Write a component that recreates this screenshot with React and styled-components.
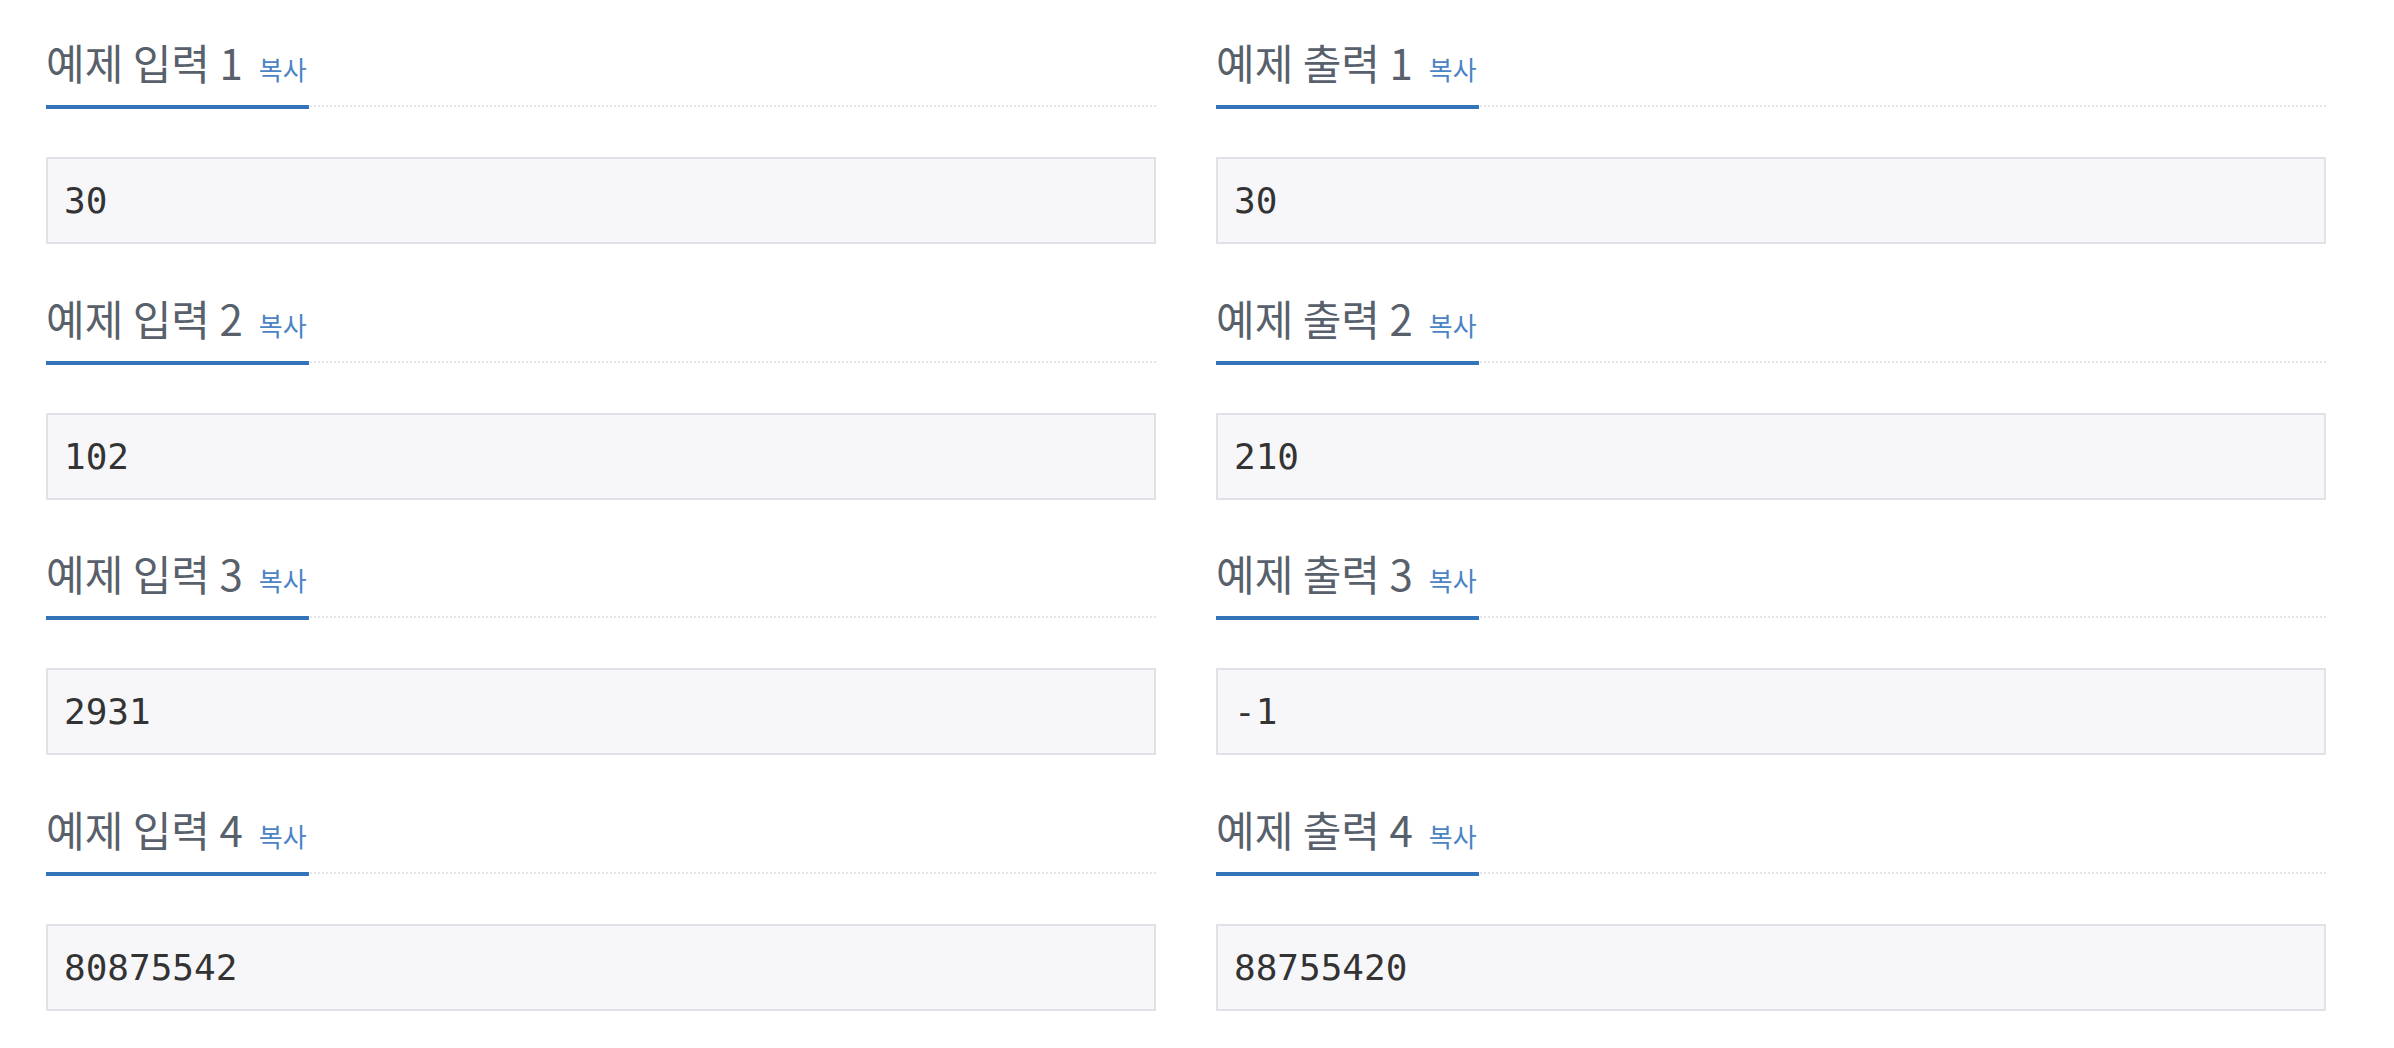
import React from 'react'
import styled, { createGlobalStyle } from 'styled-components'

const GlobalStyle = createGlobalStyle`
  html, body {
    margin: 0;
    padding: 0;
    background: #fff;
  }
  body {
    font-family: "Noto Sans CJK KR", "Noto Sans", sans-serif;
  }
`;

const samples = [
  { no: 1, input: '30', output: '30' },
  { no: 2, input: '102', output: '210' },
  { no: 3, input: '2931', output: '-1' },
  { no: 4, input: '80875542', output: '88755420' },
];

const Page = styled.div`
  padding: 37px 68px 0 46px;
`;

const Row = styled.div`
  display: grid;
  grid-template-columns: 1110px 1110px;
  column-gap: 60px;
`;

const Section = styled.section`
  display: flex;
  flex-direction: column;
`;

const Headline = styled.div`
  border-bottom: 2px dotted #e3e3e8;
  margin-bottom: 50px;
`;

const Title = styled.h2`
  display: inline-block;
  margin: 0 0 -4px 0;
  padding-bottom: 18px;
  border-bottom: 4px solid #3373ba;
  font-size: 42px;
  line-height: 50px;
  font-weight: 400;
  color: #58606b;
`;

const CopyButton = styled.button`
  margin-left: 16px;
  padding: 0 2px 0 0;
  border: 0;
  background: none;
  font-family: "Noto Sans CJK KR", "Noto Sans", sans-serif;
  font-size: 26px;
  color: #4a84c6;
  cursor: pointer;
`;

const Sample = styled.pre`
  margin: 0 0 48.7px 0;
  padding: 19px 16px;
  border: 2px solid #e1e1e8;
  background: #f7f7f9;
  font-family: "DejaVu Sans Mono", "Liberation Mono", monospace;
  font-size: 36px;
  line-height: 45px;
  color: #333;
`;

function SampleBlock({ label, no, value }) {
  return (
    <Section>
      <Headline>
        <Title>
          예제 {label} {no}
          <CopyButton type="button">복사</CopyButton>
        </Title>
      </Headline>
      <Sample>{value}</Sample>
    </Section>
  );
}

export default function App() {
  return (
    <>
      <GlobalStyle />
      <Page>
        {samples.map((s) => (
          <Row key={s.no}>
            <SampleBlock label="입력" no={s.no} value={s.input} />
            <SampleBlock label="출력" no={s.no} value={s.output} />
          </Row>
        ))}
      </Page>
    </>
  );
}
